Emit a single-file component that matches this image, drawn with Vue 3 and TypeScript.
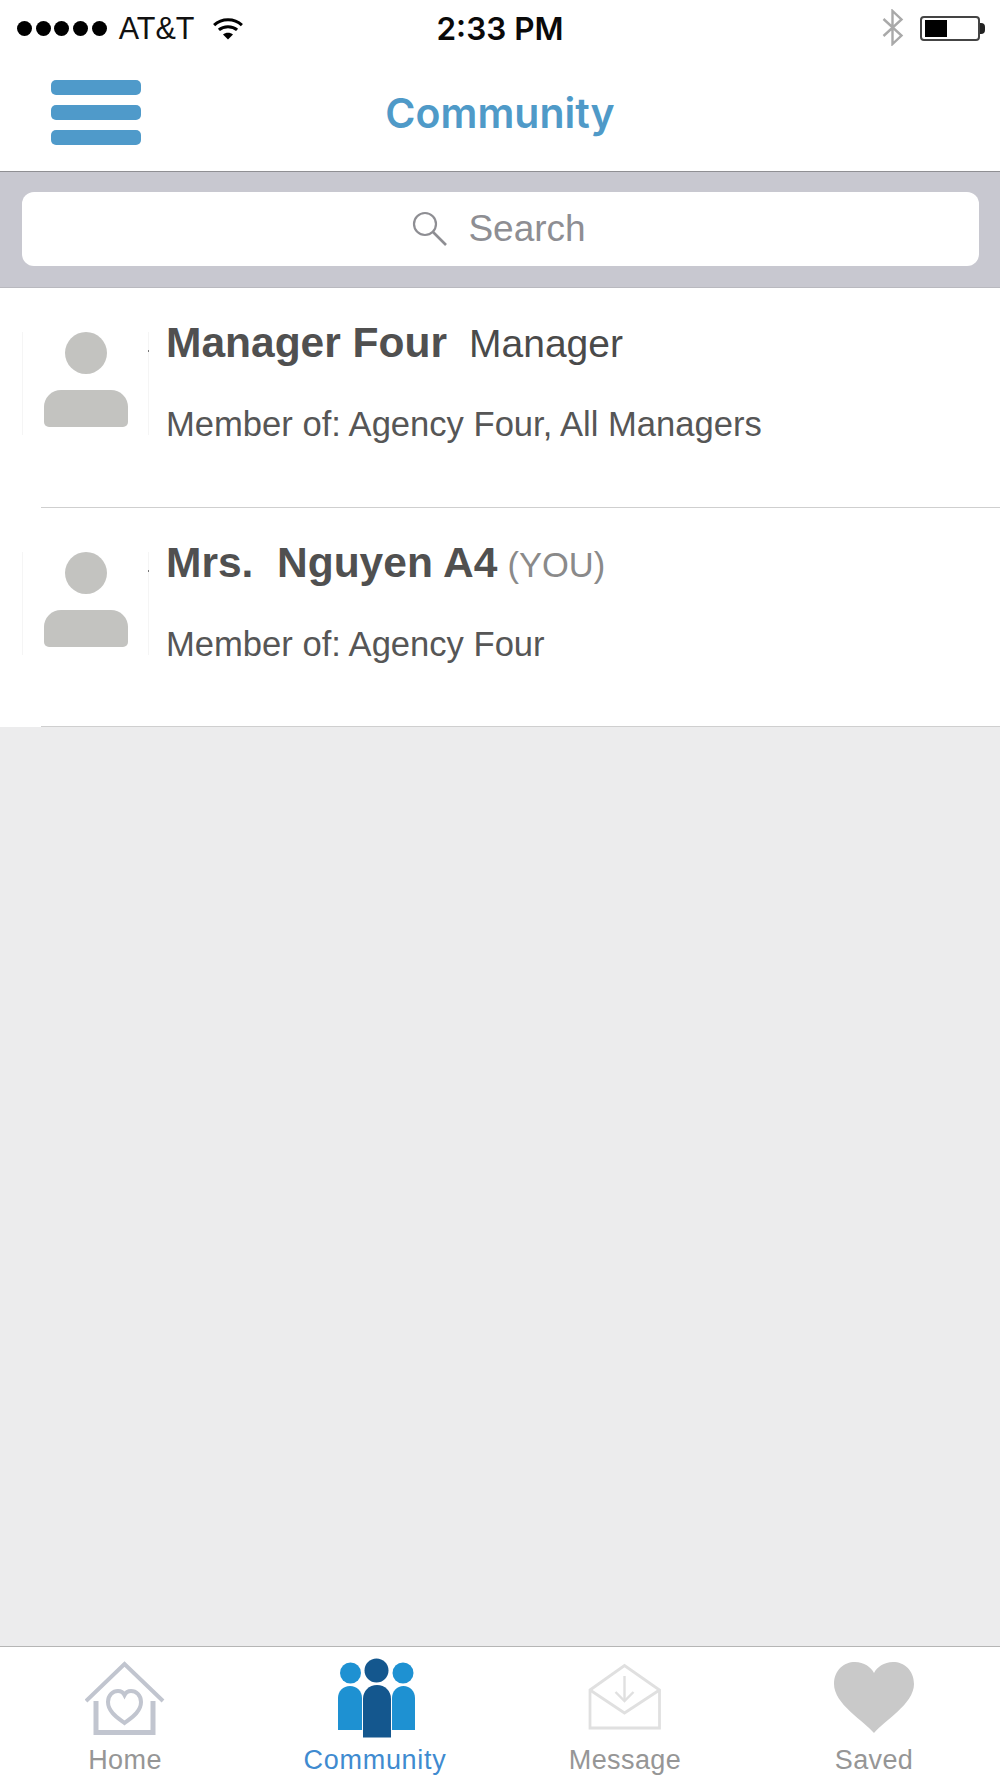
<script setup lang="ts">
interface Member {
  name: string
  role?: string
  you?: boolean
  groups: string
}

const members: Member[] = [
  { name: 'Manager Four', role: 'Manager', groups: 'Member of: Agency Four, All Managers' },
  { name: 'Mrs.\u00a0 Nguyen A4', you: true, groups: 'Member of: Agency Four' }
]
</script>

<template>
  <div class="app">
    <div class="status">
      <div class="status__left">
        <span class="status__dots"><i v-for="n in 5" :key="n"></i></span>
        <span class="status__carrier">AT&amp;T</span>
        <svg class="status__wifi" width="32" height="23" viewBox="0 0 32 24" fill="none" stroke="#000" stroke-width="3.2">
          <path d="M1.5 8.5C9.5 1 22.5 1 30.5 8.5" />
          <path d="M6.5 13.5C11.5 9 20.5 9 25.5 13.5" />
          <path d="M16 23.5L10.8 18.2C13.5 15.8 18.5 15.8 21.2 18.2Z" fill="#000" stroke="none" />
        </svg>
      </div>
      <div class="status__time">2:33 PM</div>
      <div class="status__right">
        <svg class="status__bt" width="22" height="37" viewBox="0 0 22 37" fill="none" stroke="#a9a9a9" stroke-width="2.4">
          <path d="M1.5 10L19.5 26.5L10.5 35V2L19.5 10.5L1.5 27" />
        </svg>
        <div class="battery"><div class="battery__fill"></div></div>
        <div class="battery__tip"></div>
      </div>
    </div>

    <header class="nav">
      <div class="nav__burger"><i></i><i></i><i></i></div>
      <div class="nav__title">Community</div>
      <div></div>
    </header>

    <div class="searchbar">
      <div class="searchbar__field">
        <svg width="36" height="36" viewBox="0 0 36 36" fill="none" stroke="#8e8e93" stroke-width="2.2">
          <circle cx="13" cy="13" r="11" />
          <path d="M21 21L34 34" stroke-width="2.6" />
        </svg>
        <span>Search</span>
      </div>
    </div>

    <ul class="list">
      <li v-for="m in members" :key="m.name" class="row">
        <div class="row__body">
          <div class="avatar">
            <div class="avatar__head"></div>
            <div class="avatar__torso"></div>
          </div>
          <div class="row__text">
            <div class="row__title">
              <span class="row__name">{{ m.name }}</span>
              <span v-if="m.role" class="row__role">{{ m.role }}</span>
              <span v-if="m.you" class="row__you">(YOU)</span>
            </div>
            <div class="row__groups">{{ m.groups }}</div>
          </div>
        </div>
        <div class="row__rule"></div>
      </li>
    </ul>

    <div class="fill"></div>

    <nav class="tabs">
      <div class="tab">
        <svg width="80" height="80" viewBox="0 -3 80 80" fill="none" stroke="#c1c5cf" stroke-width="4">
          <path d="M1 40L39.5 3L78 40" />
          <path d="M11 40V71.5H68V40" stroke-width="5" />
          <path d="M39.5 62C33 57 23 51 23 41C23 34 28 30 33 30C36.5 30 38.5 32 39.5 34C40.5 32 43 30 46 30C51 30 56 34 56 41C56 51 46 57 39.5 62Z" />
        </svg>
        <span class="tab__label">Home</span>
      </div>
      <div class="tab">
        <svg class="tab__icon--people" width="78" height="80" viewBox="0 0 78 80">
          <g fill="#1e91d2">
            <circle cx="12.5" cy="15" r="10.5" />
            <circle cx="65" cy="15" r="10.5" />
            <path d="M0 72V40C0 33 5 28 12 28C19 28 24 33 24 40V72Z" />
            <path d="M54 72V40C54 33 59 28 65.5 28C72 28 77 33 77 40V72Z" />
          </g>
          <g fill="#14578e">
            <circle cx="38.5" cy="12.5" r="12" />
            <path d="M25 79.5V41C25 33 31 27 39 27C47 27 53 33 53 41V79.5Z" />
          </g>
        </svg>
        <span class="tab__label tab__label--active">Community</span>
      </div>
      <div class="tab">
        <svg width="74" height="80" viewBox="0 -6 74 80" fill="none" stroke="#e0e0e0" stroke-width="2.8">
          <path d="M2 26L36.5 1.5L71.5 26V64H2Z" />
          <path d="M2 26L36.5 49L71.5 26" />
          <path d="M36.5 12V36" stroke-width="2.4" />
          <path d="M27.5 28L36.5 37L45.5 28" stroke-width="2.4" />
        </svg>
        <span class="tab__label">Message</span>
      </div>
      <div class="tab tab--saved">
        <svg width="80" height="80" viewBox="0 -4 80 80">
          <path d="M40 71C30 59 0 42 0 22C0 8 10 0 21 0C30 0 37 5 40 11C43 5 50 0 59 0C70 0 80 8 80 22C80 42 50 59 40 71Z" fill="#c9c9c9" />
        </svg>
        <span class="tab__label">Saved</span>
      </div>
    </nav>
  </div>
</template>

<style scoped>
.app { height: 100vh; display: flex; flex-direction: column; background: #fff; font-family: "Liberation Sans", Arial, sans-serif; overflow: hidden; }

.status { height: 54px; box-sizing: border-box; padding-top: 2px; display: grid; grid-template-columns: 1fr auto 1fr; align-items: center; color: #000; }
.status__left { display: flex; align-items: center; padding-left: 17px; }
.status__dots { display: flex; gap: 3.7px; }
.status__dots i { width: 15px; height: 15px; border-radius: 50%; background: #000; }
.status__carrier { margin-left: 12px; font-size: 30.5px; color: #111; }
.status__wifi { margin-left: 18px; }
.status__time { font-family: Inter, "Liberation Sans", sans-serif; font-weight: 600; font-size: 31.5px; color: #0a0a0a; }
.status__right { display: flex; align-items: center; justify-content: flex-end; padding-right: 15px; }
.status__bt { margin-top: -2px; transform: translateX(1px); }
.battery { width: 60px; height: 25px; margin-left: 17px; padding: 2px 3px; box-sizing: border-box; border: 2px solid #444; border-radius: 4px; }
.battery__fill { width: 22px; height: 100%; background: #000; }
.battery__tip { width: 5px; height: 11px; background: #222; border-radius: 0 4px 4px 0; }

.nav { height: 118px; display: grid; grid-template-columns: 1fr auto 1fr; align-items: center; border-bottom: 1px solid #8f8f93; box-sizing: border-box; }
.nav__burger { display: flex; flex-direction: column; gap: 10px; padding-left: 51px; margin-top: -1px; }
.nav__burger i { width: 90px; height: 15px; border-radius: 5px; background: #4f9aca; }
.nav__title { font-family: Inter, "Liberation Sans", sans-serif; font-weight: 600; font-size: 41px; color: #4f9ac8; }

.searchbar { height: 116px; box-sizing: border-box; padding: 20px 21px 21px 22px; background: #c8c8d0; border-bottom: 1px solid #b9b9bf; }
.searchbar__field { height: 74px; display: flex; align-items: center; justify-content: center; gap: 20px; padding-right: 3px; background: #fff; border-radius: 12px; color: #8e8e93; font-size: 37px; }

.list { margin: 0; padding: 0; list-style: none; background: #fff; }
.row__body { height: 219px; box-sizing: border-box; display: flex; align-items: flex-start; padding-left: 22px; }
.row:last-child .row__body { height: 218px; }
.row__rule { height: 1px; margin-left: 41px; background: #cfcfcf; }
.avatar { position: relative; width: 127px; height: 103px; margin-top: 44px; box-sizing: border-box; display: flex; flex-direction: column; align-items: center; border: solid #f5f5f5; border-width: 0 1px; }
.avatar::after { content: ""; position: absolute; right: -1px; top: 18px; width: 1px; height: 2px; background: #777; }
.avatar__head { width: 42px; height: 42px; border-radius: 50%; background: #c3c3c0; }
.avatar__torso { width: 84px; height: 37px; margin-top: 16px; border-radius: 17px 17px 5px 5px; background: #c3c3c0; }
.row__text { margin-left: 17px; padding-top: 30px; color: #505050; }
.row__title { display: flex; align-items: baseline; height: 50px; line-height: 50px; white-space: pre; }
.row__name { font-size: 42.5px; font-weight: 700; }
.row__role { margin-left: 22px; font-size: 39px; color: #4a4a4a; }
.row__you { margin-left: 10px; font-size: 34.5px; color: #8a8a8a; }
.row__groups { margin-top: 36px; font-size: 34.6px; line-height: 40px; color: #565656; }

.fill { flex: 1; background: #ececed; }

.tabs { height: 132px; box-sizing: border-box; display: grid; grid-template-columns: repeat(4, 1fr); padding-top: 11px; border-top: 1px solid #b5b5b5; background: #fff; }
.tab { display: flex; flex-direction: column; align-items: center; }
.tab--saved { transform: translateX(-1px); }
.tab__icon--people { transform: translateX(2px); }
.tab__label { margin-top: 6px; font-size: 27px; line-height: 32px; letter-spacing: .4px; color: #969696; }
.tab__label--active { color: #3f8bd0; letter-spacing: .7px; }
</style>
